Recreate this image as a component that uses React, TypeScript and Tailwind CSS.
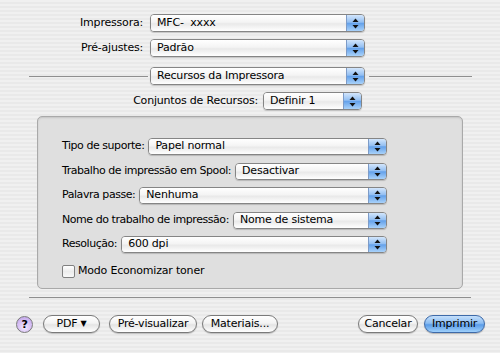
import React from 'react'

const font = "font-['DejaVu_Sans','Liberation_Sans',sans-serif]"

function Arrows() {
  return (
    <svg width="7" height="11" viewBox="0 0 7 11">
      <path d="M3.5 0.5 L6.5 4 L0.5 4 Z" fill="#111" />
      <path d="M3.5 10.5 L6.5 7 L0.5 7 Z" fill="#111" />
    </svg>
  )
}

function Popup({ value, className }: { value: string; className: string }) {
  return (
    <div
      className={`flex shrink-0 overflow-hidden rounded-[4px] border border-[#858585] shadow-[0_1px_1px_rgba(0,0,0,0.18)] ${className}`}
    >
      <div className="flex flex-1 items-center whitespace-pre bg-[linear-gradient(to_bottom,#ffffff_0%,#f4f4f4_45%,#e9e9e9_55%,#ffffff_100%)] pl-[6px] text-[11px] tracking-[-0.2px] text-black">
        {value}
      </div>
      <div className="flex w-[18px] items-center justify-center border-l border-[#7d9bc7] bg-[linear-gradient(to_bottom,#d3e6fc_0%,#93bff2_45%,#64a1ea_52%,#a9d2fa_100%)]">
        <Arrows />
      </div>
    </div>
  )
}

function Pill({ children, className = '' }: { children: React.ReactNode; className?: string }) {
  return (
    <div
      className={`flex h-[18px] items-center justify-center rounded-full border border-[#7a7a7a] bg-[linear-gradient(to_bottom,#ffffff_0%,#f3f3f3_45%,#e4e4e4_55%,#ffffff_100%)] text-[11px] text-black shadow-[0_1px_1px_rgba(0,0,0,0.2)] ${className}`}
    >
      {children}
    </div>
  )
}

// panel row: label keeps its natural width, popup fills to the common right edge
function Row({ label, value }: { label: string; value: string }) {
  return (
    <div className="flex w-[325px] items-center gap-[4px]">
      <span className="whitespace-nowrap text-[11px] tracking-[-0.45px] text-black">{label}</span>
      <Popup value={value} className="h-[17px] flex-1" />
    </div>
  )
}

export default function App() {
  return (
    <div
      className={`${font} relative flex h-[353px] w-[500px] flex-col overflow-hidden bg-[repeating-linear-gradient(to_bottom,#f0f0f0_0px,#f0f0f0_2px,#e9e9e9_2px,#e9e9e9_4px)] tracking-[-0.2px] text-black`}
    >
      {/* printer / presets */}
      <div className="mt-[14px] flex items-center">
        <span className="w-[150px] pr-[7px] text-right text-[11px]">Impressora:</span>
        <Popup value="MFC-  xxxx" className="h-[18px] w-[215px]" />
      </div>
      <div className="mt-[7px] flex items-center">
        <span className="w-[150px] pr-[7px] text-right text-[11px]">Pré-ajustes:</span>
        <Popup value="Padrão" className="h-[18px] w-[215px]" />
      </div>

      {/* section selector */}
      <div className="mt-[10px] flex items-center">
        <div className="ml-[29px] h-px w-[119px] bg-[#8f8f8f]" />
        <div className="ml-[2px]">
          <Popup value="Recursos da Impressora" className="h-[18px] w-[215px]" />
        </div>
        <div className="ml-[4px] h-px w-[103px] bg-[#8f8f8f]" />
      </div>

      <div className="mt-[7px] flex items-center">
        <span className="w-[263px] pr-[5px] text-right text-[11px]">Conjuntos de Recursos:</span>
        <Popup value="Definir 1" className="h-[18px] w-[99px]" />
      </div>

      {/* feature panel */}
      <div className="ml-[37px] mt-[6px] flex h-[173px] w-[426px] flex-col gap-[7.5px] rounded-[5px] border border-[#a9a9a9] bg-[#dfdfdf] pl-[24px] pt-[21px] shadow-[inset_0_1px_2px_rgba(0,0,0,0.12)]">
        <Row label="Tipo de suporte:" value="Papel normal" />
        <Row label="Trabalho de impressão em Spool:" value="Desactivar" />
        <Row label="Palavra passe:" value="Nenhuma" />
        <Row label="Nome do trabalho de impressão:" value="Nome de sistema" />
        <Row label="Resolução:" value="600 dpi" />
        <div className="mt-[2.5px] flex items-center gap-[3px]">
          <div className="h-[13px] w-[13px] rounded-[2px] border border-[#808080] bg-[linear-gradient(to_bottom,#ffffff,#ececec_50%,#f8f8f8)]" />
          <span className="text-[11px]">Modo Economizar toner</span>
        </div>
      </div>

      <div className="ml-[29px] mt-[8px] h-px w-[442px] bg-[#8f8f8f]" />

      {/* bottom buttons */}
      <div className="mt-[17px] flex items-center">
        <div className="ml-[16px] flex h-[17px] w-[17px] items-center justify-center rounded-full border border-[#7a7a7a] bg-[radial-gradient(circle_at_50%_70%,#f3e9ff_0%,#d2b9f3_60%,#b69be0_100%)] text-[11px] font-bold leading-none">
          ?
        </div>
        <Pill className="ml-[10px] w-[57px]">
          PDF <span className="ml-[3px] text-[8px]">▼</span>
        </Pill>
        <Pill className="ml-[9px] w-[88px]">Pré-visualizar</Pill>
        <Pill className="ml-[5px] w-[76px]">Materiais...</Pill>
        <Pill className="ml-[80px] w-[60px]">Cancelar</Pill>
        <div className="ml-[6px] flex h-[18px] w-[61px] items-center justify-center rounded-full border border-[#3e6aa8] bg-[linear-gradient(to_bottom,#c4dffb_0%,#8cbdf2_45%,#5a9ce8_55%,#9fd0fb_100%)] text-[11px] text-black shadow-[0_1px_1px_rgba(0,0,0,0.25)]">
          Imprimir
        </div>
      </div>
    </div>
  )
}
